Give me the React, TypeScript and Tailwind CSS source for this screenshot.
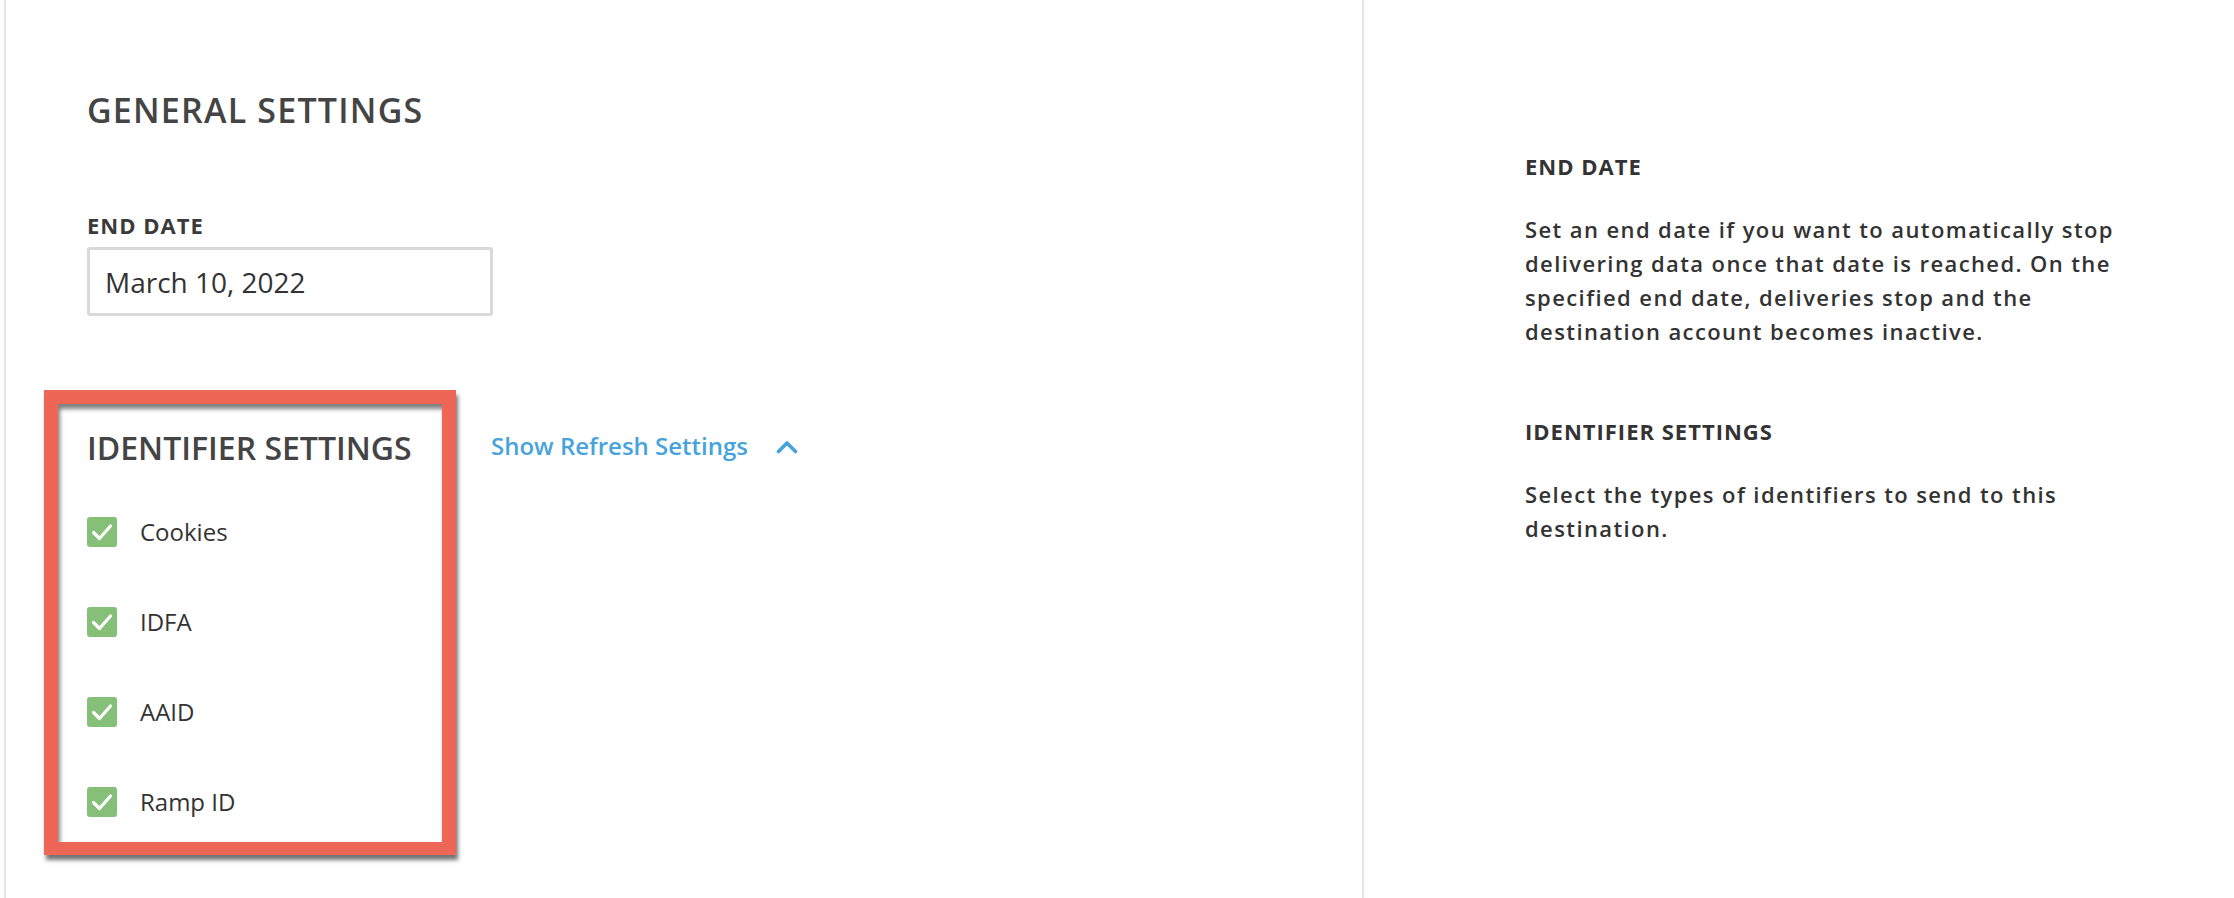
import React from "react";

function Check({ label }: { label: string }) {
  return (
    <div className="flex items-center h-[30px] gap-[23px]">
      <div className="w-[30px] h-[30px] rounded-[3px] bg-[#86bf77] flex items-center justify-center">
        <svg width="30" height="30" viewBox="0 0 30 30">
          <polyline points="6.5,15.5 12.5,21.5 23.5,9" fill="none" stroke="#ffffff" strokeWidth="3.2" strokeLinecap="round" strokeLinejoin="round" />
        </svg>
      </div>
      <span className="text-[24px] leading-[30px] text-[#333333]">{label}</span>
    </div>
  );
}

export default function App() {
  return (
    <div className="w-[2234px] h-[898px] bg-white flex font-['Open_Sans',sans-serif] overflow-hidden">
      <div className="ml-[4px] w-[1360px] h-full border-l-2 border-r-2 border-[#e3e3e3] pl-[81px] pt-[90px]">
        <h1 className="text-[34px] leading-[40px] font-semibold tracking-[1.2px] text-[#444444]">GENERAL SETTINGS</h1>
        <div className="mt-[80px] text-[22px] leading-[30px] font-bold tracking-[1px] text-[#3a3a3a]">END DATE</div>
        <div className="mt-[7px] w-[406px] h-[69px] border-[3px] border-[#d9d9d9] rounded-[3px] flex items-center pl-[15px]">
          <span className="text-[28px] leading-[38px] text-[#333333]">March 10, 2022</span>
        </div>
        <div className="mt-[74px] flex items-start">
          <div className="-ml-[43px] w-[412px] border-[14px] border-b-[13px] border-[#ee6655] pl-[29px] pt-[24px] pb-[25px] shadow-[2px_5px_4px_rgba(0,0,0,0.55),inset_2px_5px_4px_rgba(0,0,0,0.5)]">
            <h2 className="text-[32px] leading-[40px] font-semibold text-[#444444] whitespace-nowrap">IDENTIFIER SETTINGS</h2>
            <div className="mt-[49px] flex flex-col gap-[60px]">
              <Check label="Cookies" />
              <Check label="IDFA" />
              <Check label="AAID" />
              <Check label="Ramp ID" />
            </div>
          </div>
          <div className="ml-[35px] mt-[41px] flex items-center gap-[28px] text-[#46a3dc]">
            <span className="text-[24px] leading-[30px] font-semibold">Show Refresh Settings</span>
            <svg width="22" height="14" viewBox="0 0 22 14" className="mt-[1px]">
              <polyline points="2.5,11.5 11,3 19.5,11.5" fill="none" stroke="#46a3dc" strokeWidth="3.6" strokeLinecap="round" strokeLinejoin="round" />
            </svg>
          </div>
        </div>
      </div>
      <div className="pl-[161px] pt-[151px] w-[870px] text-[#333333]">
        <div className="text-[22px] leading-[30px] font-bold tracking-[1px]">END DATE</div>
        <p className="mt-[31px] w-[615px] text-[22px] leading-[34px] font-semibold tracking-[1.4px]">
          Set an end date if you want to automatically stop delivering data once that date is reached. On the specified end date, deliveries stop and the destination account becomes inactive.
        </p>
        <div className="mt-[68px] text-[22px] leading-[30px] font-bold tracking-[1px]">IDENTIFIER SETTINGS</div>
        <p className="mt-[31px] w-[615px] text-[22px] leading-[34px] font-semibold tracking-[1.4px]">
          Select the types of identifiers to send to this destination.
        </p>
      </div>
    </div>
  );
}
